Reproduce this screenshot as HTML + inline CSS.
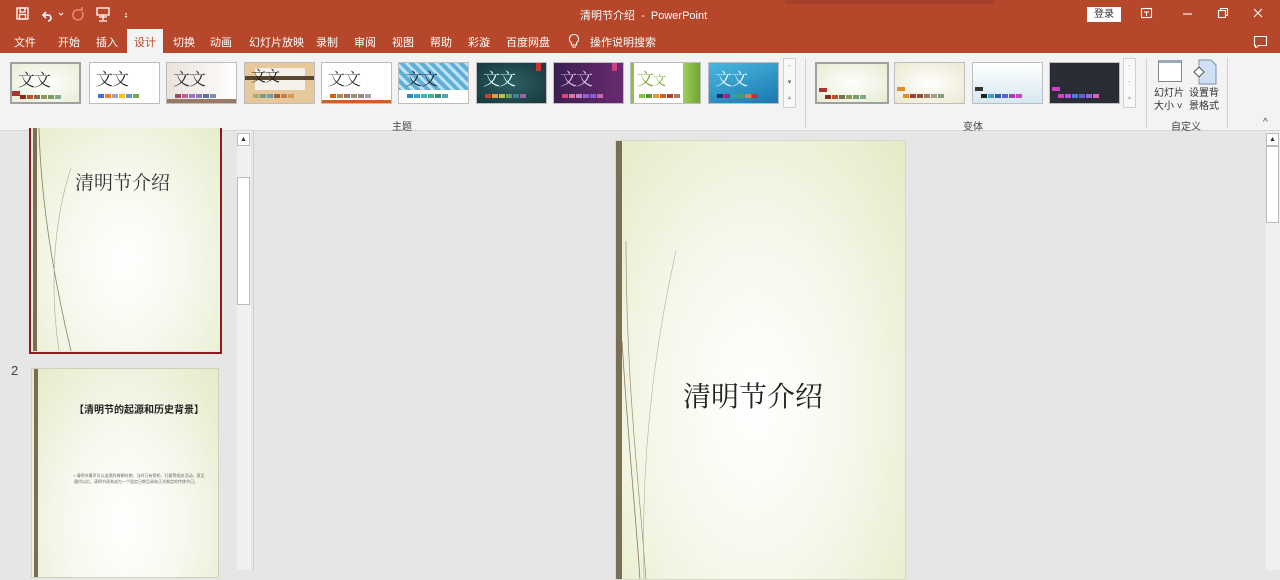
<!DOCTYPE html>
<html><head><meta charset="utf-8"><style>
*{box-sizing:border-box;margin:0;padding:0}
body{width:1280px;height:570px;overflow:hidden;background:#e6e6e6;font-family:"Liberation Sans","Noto Sans CJK SC",sans-serif;position:relative;font-size:12px;color:#333}
.abs{position:absolute}
#top{left:0;top:0;width:1280px;height:53px;background:#b7472a;color:#fff}
.tab{position:absolute;top:34px;font-size:11px;color:#fff}
.th{position:absolute;top:62px;width:71px;height:42px;border:1px solid #bdbdbd;overflow:hidden}
.th .t{position:absolute;left:6px;top:2px;font-size:17px;font-family:"Noto Serif CJK SC",serif;letter-spacing:-1px}
.sw{position:absolute;left:8px;top:31px;display:flex;gap:1px}
.sw i{display:block;width:6px;height:4px}
.lbl{position:absolute;top:118px;font-size:10px;color:#444}
.slidebg{background:radial-gradient(ellipse at 50% 60%,#ffffff 0%,#f7f8ee 45%,#e6edcc 100%)}
</style></head><body>
<div id="top" class="abs">
  <svg class="abs" style="left:15px;top:6px" width="120" height="16" viewBox="0 0 120 16" fill="none" stroke="#fff" stroke-width="1.3">
    <rect x="2" y="2" width="11" height="11"/><rect x="5" y="2" width="5" height="4"/><rect x="4.5" y="8.5" width="6" height="4.5"/>
    <path d="M31 6 l-3 3 3 3 M28 9 h5 a3 3 0 0 1 0 6" stroke-width="1.6"/><path d="M44 7 l2 2 2-2" stroke-width="1"/>
    <path d="M64 4 a5 5 0 1 0 3 2 M64 4 l3 0 0 -3" stroke="#e8917a" stroke-width="1.4"/>
    <rect x="82" y="2" width="12" height="7"/><path d="M84 11 h8 M88 9 v5 M84 15 h8"/><path d="M110 8 h2 M110 10 l1 1 1-1" stroke-width="1"/>
  </svg>
  <div class="abs" style="left:580px;top:7px;font-size:11px">清明节介绍&nbsp; -&nbsp; PowerPoint</div>
  <div class="abs" style="left:785px;top:0;width:210px;height:4px;background:#a5402a"></div>
  <div class="abs" style="left:1087px;top:7px;width:34px;height:15px;background:#fff;color:#333;font-size:10px;text-align:center;line-height:15px">登录</div>
  <svg class="abs" style="left:1140px;top:6px" width="140" height="42" viewBox="0 0 140 42" fill="none" stroke="#fff" stroke-width="1.1">
    <rect x="1.5" y="2.5" width="10" height="9"/><path d="M4 6 h5 M6.5 6 v4"/>
    <path d="M43 8 h9"/><rect x="78.5" y="4.5" width="7" height="7"/><path d="M80.5 4.5 v-2 h7 v7 h-2"/>
    <path d="M114 3 l8 8 M122 3 l-8 8"/>
    <path d="M114.5 30.5 h12 v9 h-8 l-3 3 v-3 h-1 z"/>
  </svg>
  <div class="tab" style="left:14px">文件</div>
  <div class="tab" style="left:58px">开始</div>
  <div class="tab" style="left:96px">插入</div>
  <div class="abs" style="left:127px;top:29px;width:36px;height:24px;background:#f3f3f3"></div>
  <div class="tab" style="left:134px;color:#b7472a">设计</div>
  <div class="tab" style="left:173px">切换</div>
  <div class="tab" style="left:210px">动画</div>
  <div class="tab" style="left:249px">幻灯片放映</div>
  <div class="tab" style="left:316px">录制</div>
  <div class="tab" style="left:354px">审阅</div>
  <div class="tab" style="left:392px">视图</div>
  <div class="tab" style="left:430px">帮助</div>
  <div class="tab" style="left:468px">彩漩</div>
  <div class="tab" style="left:506px">百度网盘</div>
  <svg class="abs" style="left:567px;top:33px" width="14" height="16" viewBox="0 0 14 16" fill="none" stroke="#fff" stroke-width="1.1"><path d="M7 1.5 a4.5 4.5 0 0 0 -2.5 8.3 v2.2 h5 v-2.2 A4.5 4.5 0 0 0 7 1.5 M5 14 h4"/></svg>
  <div class="tab" style="left:590px">操作说明搜索</div>
</div>
<div class="abs" style="left:0;top:53px;width:1280px;height:78px;background:#f3f3f3;border-bottom:1px solid #d6d6d6"></div>

<div class="th" style="left:10px;border:2px solid #a0a0a0;background:radial-gradient(#fff,#e8eed6)"><span class="t" style="color:#333">文文</span><div class="abs" style="left:0;top:27px;width:8px;height:5px;background:#a33"></div><div class="sw"><i style="background:#8c2b1c"></i><i style="background:#c0502d"></i><i style="background:#7d6b56"></i><i style="background:#8a9a5b"></i><i style="background:#7c9a6e"></i><i style="background:#7fa88f"></i></div></div>
<div class="th" style="left:89px;background:#fff"><span class="t">文文</span><div class="sw"><i style="background:#4472c4"></i><i style="background:#ed7d31"></i><i style="background:#a5a5a5"></i><i style="background:#ffc000"></i><i style="background:#5b9bd5"></i><i style="background:#70ad47"></i></div></div>
<div class="th" style="left:166px;background:linear-gradient(90deg,#eae3dc,#fff)"><span class="t">文文</span><div class="abs" style="left:0;top:36px;width:71px;height:6px;background:#9b7a63"></div><div class="sw"><i style="background:#a04b6a"></i><i style="background:#c06090"></i><i style="background:#a070c0"></i><i style="background:#8080c0"></i><i style="background:#6070a0"></i><i style="background:#8090a0"></i></div></div>
<div class="th" style="left:244px;background:#e6c89a"><div class="abs" style="left:10px;top:5px;width:50px;height:22px;background:#f4f0ea"></div><div class="abs" style="left:0;top:13px;width:71px;height:4px;background:#5a4630"></div><span class="t" style="font-size:15px;color:#222">文文</span><div class="sw"><i style="background:#a6b06a"></i><i style="background:#7a9a90"></i><i style="background:#6aa0b0"></i><i style="background:#a06040"></i><i style="background:#c08050"></i><i style="background:#d0a050"></i></div></div>
<div class="th" style="left:321px;background:#fff"><span class="t" style="color:#444">文文</span><div class="abs" style="left:0;top:37px;width:71px;height:3px;background:#d06020"></div><div class="sw"><i style="background:#d06020"></i><i style="background:#c08050"></i><i style="background:#a07060"></i><i style="background:#a09070"></i><i style="background:#909090"></i><i style="background:#b0a090"></i></div></div>
<div class="th" style="left:398px;background:repeating-linear-gradient(45deg,#5fb0d8 0 4px,#bfe2f2 4px 7px);"><div class="abs" style="left:0;top:27px;width:71px;height:15px;background:#fff"></div><span class="t" style="color:#234">文文</span><div class="sw"><i style="background:#2e86c1"></i><i style="background:#3fa0d0"></i><i style="background:#4bb0c0"></i><i style="background:#4ab090"></i><i style="background:#3a9070"></i><i style="background:#60a0b0"></i></div></div>
<div class="th" style="left:476px;background:radial-gradient(#2d5e62,#17393d)"><span class="t" style="color:#cfe">文文</span><div class="abs" style="left:59px;top:0;width:5px;height:8px;background:#c33"></div><div class="sw"><i style="background:#d04030"></i><i style="background:#e0a030"></i><i style="background:#c0c040"></i><i style="background:#60a060"></i><i style="background:#4080a0"></i><i style="background:#a060a0"></i></div></div>
<div class="th" style="left:553px;background:linear-gradient(90deg,#3a2050,#6a2a70)"><span class="t" style="color:#dbe">文文</span><div class="abs" style="left:58px;top:0;width:5px;height:8px;background:#d04080"></div><div class="sw"><i style="background:#e04080"></i><i style="background:#e070a0"></i><i style="background:#c080d0"></i><i style="background:#a060c0"></i><i style="background:#8060d0"></i><i style="background:#d060b0"></i></div></div>
<div class="th" style="left:630px;background:#fff"><div class="abs" style="left:52px;top:0;width:19px;height:42px;background:linear-gradient(90deg,#a0d060,#6aa02a)"></div><div class="abs" style="left:0;top:0;width:3px;height:42px;background:#8bc34a"></div><span class="t" style="color:#7aa83a">文<span style="font-size:13px">文</span></span><div class="sw"><i style="background:#8bc34a"></i><i style="background:#5a9a3a"></i><i style="background:#e0a030"></i><i style="background:#d06030"></i><i style="background:#b04030"></i><i style="background:#a08060"></i></div></div>
<div class="th" style="left:708px;background:linear-gradient(160deg,#4ab8e0,#1a78b0)"><span class="t" style="color:#eaf8ff">文文</span><div class="sw"><i style="background:#203070"></i><i style="background:#a02080"></i><i style="background:#30a0a0"></i><i style="background:#50a050"></i><i style="background:#e08040"></i><i style="background:#c03040"></i></div></div>
<div class="abs" style="left:783px;top:58px;width:13px;height:50px;border:1px solid #d0d0d0;background:#f8f8f8;font-size:7px;color:#666;text-align:center;line-height:16px">-<br>▾<br>⩡</div>
<div class="lbl" style="left:392px">主题</div>
<div class="abs" style="left:805px;top:58px;width:1px;height:70px;background:#d0d0d0"></div>

<div class="th" style="left:815px;border:2px solid #a0a0a0;width:74px;background:radial-gradient(#fff,#e6ecd0)"><div class="abs" style="left:2px;top:24px;width:8px;height:4px;background:#a33"></div><div class="sw"><i style="background:#8c2b1c"></i><i style="background:#c0502d"></i><i style="background:#7d6b56"></i><i style="background:#8a9a5b"></i><i style="background:#7c9a6e"></i><i style="background:#7fa88f"></i></div></div>
<div class="th" style="left:894px;background:radial-gradient(#fff,#ece8d0)"><div class="abs" style="left:2px;top:24px;width:8px;height:4px;background:#e0902a"></div><div class="sw"><i style="background:#e0902a"></i><i style="background:#a04030"></i><i style="background:#905040"></i><i style="background:#908060"></i><i style="background:#a0a080"></i><i style="background:#80a080"></i></div></div>
<div class="th" style="left:972px;background:linear-gradient(180deg,#fff,#d6e8f0)"><div class="abs" style="left:2px;top:24px;width:8px;height:4px;background:#333"></div><div class="sw"><i style="background:#222"></i><i style="background:#3aa0d0"></i><i style="background:#3060a0"></i><i style="background:#6060d0"></i><i style="background:#a040c0"></i><i style="background:#d040c0"></i></div></div>
<div class="th" style="left:1049px;background:#2a2c36"><div class="abs" style="left:2px;top:24px;width:8px;height:4px;background:#d040c0"></div><div class="sw"><i style="background:#d040c0"></i><i style="background:#c050e0"></i><i style="background:#4080e0"></i><i style="background:#6060e0"></i><i style="background:#a060e0"></i><i style="background:#e060c0"></i></div></div>
<div class="abs" style="left:1123px;top:58px;width:13px;height:50px;border:1px solid #d0d0d0;background:#f8f8f8;font-size:7px;color:#888;text-align:center;line-height:16px">-<br>-<br>⩡</div>
<div class="lbl" style="left:963px">变体</div>
<div class="abs" style="left:1146px;top:58px;width:1px;height:70px;background:#d0d0d0"></div>
<div class="abs" style="left:1158px;top:60px;width:24px;height:22px;border:1px solid #888;border-top:3px solid #9ab;background:#fff"></div>
<svg class="abs" style="left:1192px;top:59px" width="26" height="26" viewBox="0 0 26 26"><path d="M7 1 h12 l5 5 v19 h-17 z" fill="#cfe0f5" stroke="#7a8fb0"/><path d="M2 13 l5-5 5 5 -5 5 z" fill="#fff" stroke="#555"/></svg>
<div class="abs" style="left:1154px;top:87px;font-size:10px;line-height:13px;color:#333">幻灯片<br>大小 ˅</div>
<div class="abs" style="left:1189px;top:87px;font-size:10px;line-height:13px;color:#333">设置背<br>景格式</div>
<div class="lbl" style="left:1171px">自定义</div>
<div class="abs" style="left:1227px;top:58px;width:1px;height:70px;background:#d0d0d0"></div>
<div class="abs" style="left:1263px;top:117px;font-size:10px;color:#444">^</div>

<!-- left panel -->
<div class="abs" style="left:29px;top:128px;width:193px;height:226px;border:2px solid #8b1c1c;border-top:none"></div>
<div class="abs slidebg" style="left:31px;top:128px;width:189px;height:223px;overflow:hidden">
  <div class="abs" style="left:2px;top:0;width:4px;height:223px;background:#7a6e55"></div>
  <svg class="abs" style="left:0;top:0" width="60" height="223"><path d="M8 0 C 10 80, 25 160, 40 223" stroke="#8a8060" fill="none" stroke-width="0.8"/><path d="M40 40 C 20 100, 20 170, 28 223" stroke="#b0a890" fill="none" stroke-width="0.6"/></svg>
  <div class="abs" style="left:44px;top:40px;font-size:19px;font-family:'Noto Serif CJK SC',serif;color:#333">清明节介绍</div>
</div>
<div class="abs" style="left:11px;top:363px;font-size:13px;color:#444">2</div>
<div class="abs slidebg" style="left:31px;top:368px;width:188px;height:210px;border:1px solid #d0d0c0;overflow:hidden;background:radial-gradient(ellipse at 50% 75%,#fff 0%,#f7f8ee 45%,#e4ebc8 100%)">
  <div class="abs" style="left:2px;top:0;width:4px;height:210px;background:#7a6e55"></div>
  <div class="abs" style="left:42px;top:32px;font-size:10px;font-weight:bold;color:#222">【清明节的起源和历史背景】</div>
  <div class="abs" style="left:42px;top:104px;width:132px;font-size:4px;line-height:6px;color:#666">▪ 清明节最早可以追溯到周朝时期，当时已有祭祀、扫墓等相关活动。直至唐代以后，清明节逐渐成为一个固定日期且具有正式制定的传统节日。</div>
</div>
<div class="abs" style="left:237px;top:131px;width:14px;height:439px;background:#f0f0f0"></div>
<div class="abs" style="left:237px;top:133px;width:13px;height:13px;border:1px solid #bbb;background:#fff;font-size:7px;text-align:center;line-height:11px">▲</div>
<div class="abs" style="left:237px;top:177px;width:13px;height:128px;border:1px solid #bbb;background:#fff"></div>
<div class="abs" style="left:253px;top:131px;width:1px;height:439px;background:#d0d0d0"></div>

<!-- main slide -->
<div class="abs slidebg" style="left:615px;top:140px;width:291px;height:440px;border:1px solid #d8d8c8;overflow:hidden;background:radial-gradient(ellipse at 48% 60%,#fff 0%,#f6f8ec 45%,#e3ebc6 100%)">
  <div class="abs" style="left:0;top:0;width:6px;height:440px;background:#7a6e55"></div>
  <svg class="abs" style="left:0;top:0" width="80" height="440"><path d="M10 100 C 10 250, 25 360, 30 440" stroke="#9a9070" fill="none" stroke-width="0.7"/><path d="M60 110 C 35 220, 25 330, 28 440" stroke="#b8b098" fill="none" stroke-width="0.6"/><path d="M6 200 C 12 300, 22 400, 24 440" stroke="#8a7c5c" fill="none" stroke-width="0.8"/></svg>
  <div class="abs" style="left:67px;top:234px;font-size:28px;font-family:'Noto Serif CJK SC',serif;color:#222">清明节介绍</div>
</div>
<div class="abs" style="left:1266px;top:131px;width:14px;height:439px;background:#f0f0f0"></div>
<div class="abs" style="left:1266px;top:133px;width:13px;height:13px;border:1px solid #bbb;background:#fff;font-size:7px;text-align:center;line-height:11px">▲</div>
<div class="abs" style="left:1266px;top:146px;width:13px;height:77px;border:1px solid #bbb;background:#fff"></div>
</body></html>
